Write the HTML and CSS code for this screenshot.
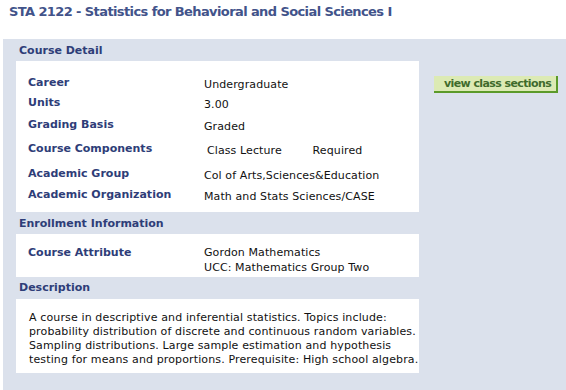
FILE: index.html
```html
<!DOCTYPE html>
<html lang="en">
<head>
  <meta charset="UTF-8">
  <title>STA 2122 - Course Detail</title>
  <link rel="stylesheet" href="styles.css">
</head>
<body>
  <h1 class="course-title">STA 2122 - Statistics for Behavioral and Social Sciences I</h1>
  <div class="panel">
    <div class="main-col">
      <div class="section-head">Course Detail</div>
      <div class="box detail-box">
        <div class="detail-grid">
          <div class="label">Career</div>
          <div class="value">Undergraduate</div>
          <div class="label">Units</div>
          <div class="value">3.00</div>
          <div class="label">Grading Basis</div>
          <div class="value">Graded</div>
          <div class="label">Course Components</div>
          <div class="value components">
            <span class="comp-name">Class Lecture</span>
            <span>Required</span>
          </div>
          <div class="label">Academic Group</div>
          <div class="value">Col of Arts,Sciences&amp;Education</div>
          <div class="label">Academic Organization</div>
          <div class="value">Math and Stats Sciences/CASE</div>
        </div>
      </div>

      <div class="section-head">Enrollment Information</div>
      <div class="box attr-box">
        <div class="detail-grid attr-grid">
          <div class="label">Course Attribute</div>
          <div class="value">Gordon Mathematics<br>UCC: Mathematics Group Two</div>
        </div>
      </div>

      <div class="section-head desc-head">Description</div>
      <div class="box desc-box">
        <p class="desc">A course in descriptive and inferential statistics. Topics include:<br>probability distribution of discrete and continuous random variables.<br>Sampling distributions. Large sample estimation and hypothesis<br>testing for means and proportions. Prerequisite: High school algebra.</p>
      </div>
    </div>
    <div class="side-col">
      <button type="button" class="sections-btn">view class sections</button>
    </div>
  </div>
</body>
</html>
```

FILE: styles.css
```css
body {
  font-family: "DejaVu Sans", Verdana, sans-serif;
  font-size: 11px;
  color: #000;
  background: #fff;
  margin: 0;
  padding: 0;
}
.course-title {
  font-size: 13px;
  font-weight: bold;
  letter-spacing: -0.6px;
  color: #42538a;
  margin: 0;
  padding: 4px 0 0 9px;
  height: 39px;
  box-sizing: border-box;
}
.panel {
  background: #dbe1ec;
  margin-left: 3px;
  padding: 0 0 18px 13px;
  display: flex;
  min-height: 351px;
  box-sizing: border-box;
}
.main-col {
  width: 403px;
  flex-shrink: 0;
}
.section-head {
  font-weight: bold;
  color: #2e3d78;
  height: 22px;
  line-height: 21px;
  padding: 1px 0 0 3px;
  box-sizing: border-box;
}
.desc-head {
  padding-top: 0;
}
.box {
  background: #fff;
}
.detail-box {
  padding: 13px 0 8px 12px;
  height: 151px;
  box-sizing: border-box;
}
.detail-grid {
  display: grid;
  grid-template-columns: 176px 1fr;
  grid-template-rows: 20px 21px 23px 24px 26px 16px;
  align-items: center;
}
.label {
  font-weight: bold;
  color: #2e3d78;
  margin-top: -4px;
}
.value {
  color: #111;
  letter-spacing: 0.1px;
}
.components {
  padding-left: 3px;
}
.comp-name {
  display: inline-block;
  width: 102px;
}
.attr-box {
  padding: 11px 0 3px 12px;
  height: 43px;
  box-sizing: border-box;
}
.attr-grid {
  grid-template-rows: auto;
  align-items: start;
  line-height: 15px;
}
.attr-grid .label {
  margin-top: 0;
}
.desc-box {
  height: 74px;
  padding: 12px 0 0 13px;
  box-sizing: border-box;
}
.desc {
  margin: 0;
  line-height: 14px;
  white-space: nowrap;
  letter-spacing: 0.13px;
  color: #111;
}
.side-col {
  padding: 37px 0 0 15px;
}
.sections-btn {
  font-family: "DejaVu Sans", Verdana, sans-serif;
  font-size: 11px;
  font-weight: bold;
  letter-spacing: -0.6px;
  color: #3f6b2c;
  background: #dceab4;
  border: none;
  border-right: 2px solid #5b9a2a;
  border-bottom: 2px solid #5b9a2a;
  width: 124px;
  padding: 0 0 0 10px;
  text-align: left;
  height: 17px;
  line-height: 15px;
  white-space: nowrap;
  cursor: pointer;
}
```
